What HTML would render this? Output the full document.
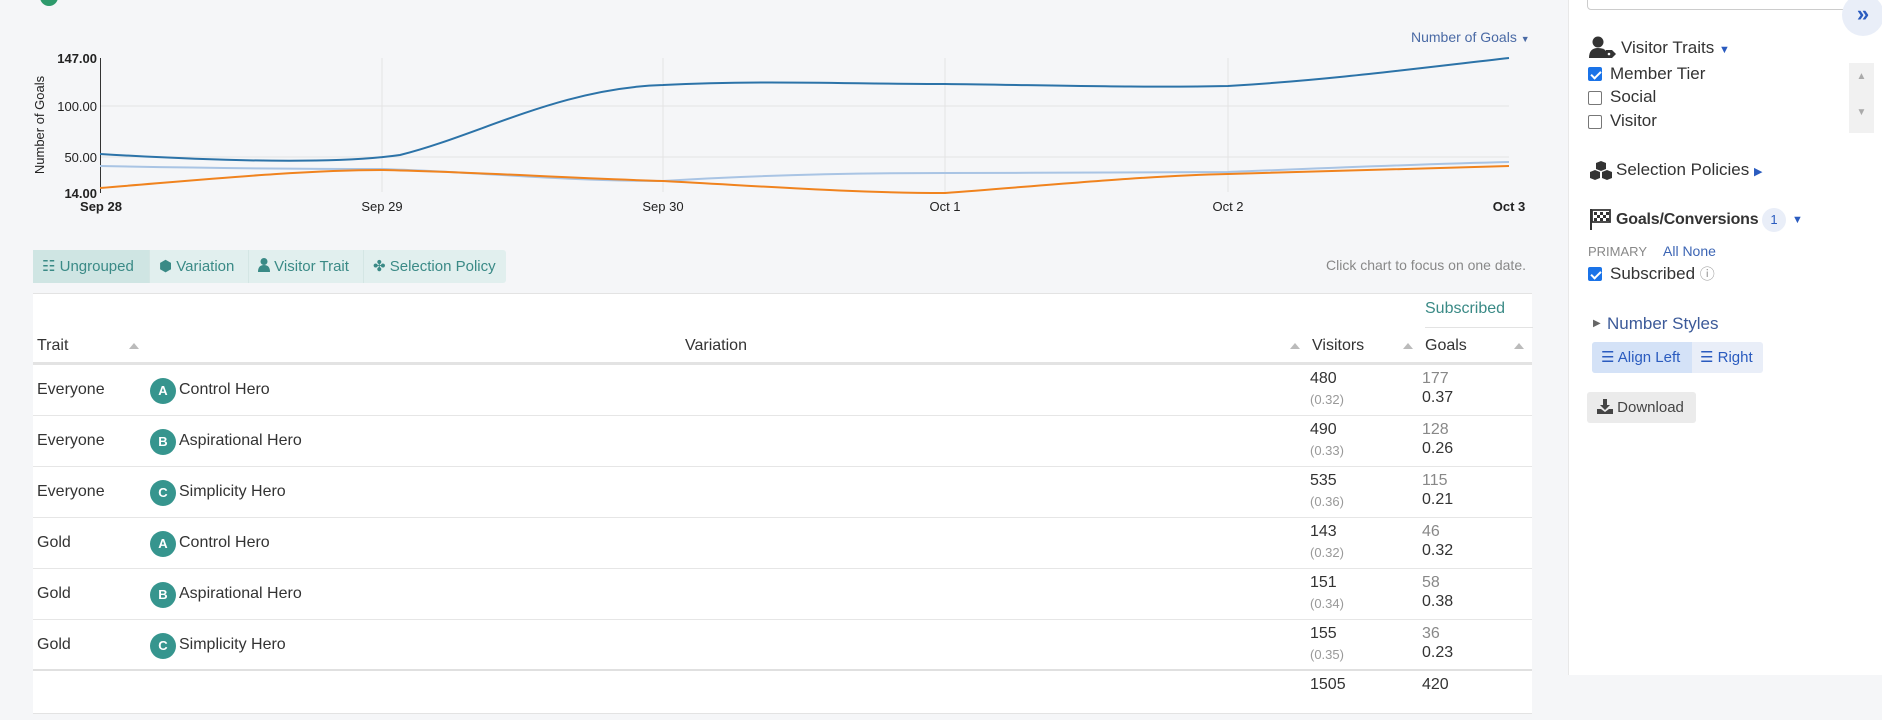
<!DOCTYPE html>
<html><head><meta charset="utf-8"><style>
*{box-sizing:border-box;margin:0;padding:0}
body{width:1882px;height:720px;overflow:hidden;background:#f5f6f8;font-family:"Liberation Sans",sans-serif;color:#333;position:relative}
.a{position:absolute;white-space:nowrap}
.tabs{left:33px;top:250px;height:33px;width:473px;background:#e1efee;border-radius:3px;display:flex}
.tabs div{height:33px;line-height:33px;color:#3a8a86;font-size:15px;padding-left:9px;border-right:1px solid #d4e6e4}
.tbl{left:33px;top:293px;width:1499px;height:421px;background:#fff;border-top:1px solid #e3e3e3;border-bottom:1px solid #e3e3e3}
.row{position:absolute;left:0;width:1499px;height:51px;border-bottom:1px solid #e6e6e6;font-size:16px}
.row .t{position:absolute;left:4px;top:16px}
.row .b{position:absolute;left:117px;top:13px;width:26px;height:26px;border-radius:50%;background:#36958e;color:#fff;font-size:13px;font-weight:bold;text-align:center;line-height:26px}
.row .v{position:absolute;left:146px;top:16px}
.row .n{position:absolute;left:1277px;top:5px}
.row .p{position:absolute;left:1277px;top:27px;font-size:13px;color:#999}
.row .g1{position:absolute;left:1389px;top:5px;color:#888}
.row .g2{position:absolute;left:1389px;top:24px}
.tri{display:inline-block;width:0;height:0;border-left:5px solid transparent;border-right:5px solid transparent;border-bottom:6px solid #bbb}
.side{left:1568px;top:0;width:314px;height:675px;background:#fff;border-left:1px solid #e8e8e8}
.cb{position:absolute;width:14px;height:14px;border:1px solid #777;border-radius:2px;background:#fff}
.cb.on{background:#1a73e8;border-color:#1a73e8}
.cb.on:after{content:"";position:absolute;left:4px;top:1px;width:4px;height:8px;border:solid #fff;border-width:0 2px 2px 0;transform:rotate(45deg)}
</style></head><body>
<div class="a" style="left:40px;top:-12px;width:18px;height:18px;border-radius:50%;background:#2e9a6c"></div>
<svg class="a" style="left:0;top:0" width="1560" height="230">
<g stroke="#e4e4e4" stroke-width="1">
<line x1="100" y1="106" x2="1509" y2="106"/><line x1="100" y1="157" x2="1509" y2="157"/>
<line x1="382" y1="58" x2="382" y2="192"/><line x1="663" y1="58" x2="663" y2="192"/><line x1="945" y1="58" x2="945" y2="192"/><line x1="1228" y1="58" x2="1228" y2="192"/>
</g>
<line x1="100.5" y1="58" x2="100.5" y2="193" stroke="#333"/>
<path d="M100,166 C200,168 300,169 382,169 C480,172 560,181 663,181 C760,175 850,173 945,173 C1040,173 1140,172 1228,172 C1330,168 1420,164 1509,162" fill="none" stroke="#a9c4e4" stroke-width="2"/>
<path d="M100,188 C200,180 300,170 382,170 C480,172 560,178 663,181 C760,186 850,193 945,193 C1040,186 1140,176 1228,174 C1330,171 1420,168 1509,166" fill="none" stroke="#f0831e" stroke-width="2"/>
<path d="M100,154 C200,160 330,165 400,155 C480,135 560,88 663,85 C760,80 850,84 945,84 C1040,85 1140,88 1228,86 C1330,80 1420,68 1509,58" fill="none" stroke="#2c73a8" stroke-width="2"/>
<g font-family="Liberation Sans" font-size="13" fill="#222" text-anchor="end">
<text x="97" y="63" font-weight="bold">147.00</text><text x="97" y="111">100.00</text><text x="97" y="162">50.00</text><text x="97" y="198" font-weight="bold">14.00</text>
</g>
<text x="44" y="125" font-family="Liberation Sans" font-size="13" fill="#222" text-anchor="middle" transform="rotate(-90 44 125)">Number of Goals</text>
<g font-family="Liberation Sans" font-size="13" fill="#222" text-anchor="middle">
<text x="101" y="211" font-weight="bold">Sep 28</text><text x="382" y="211">Sep 29</text><text x="663" y="211">Sep 30</text><text x="945" y="211">Oct 1</text><text x="1228" y="211">Oct 2</text><text x="1509" y="211" font-weight="bold">Oct 3</text>
</g>
</svg>
<div class="a" style="left:1411px;top:29px;font-size:14px;color:#4a6aa5">Number of Goals <span style="font-size:9px">▼</span></div>
<div class="a tabs">
<div style="width:117px;background:#cfe5e3">☷ Ungrouped</div>
<div style="width:99px">⬢ Variation</div>
<div style="width:115px"><svg width="12" height="14" viewBox="0 0 12 14" style="vertical-align:-1px"><circle cx="6" cy="3.5" r="3.5" fill="#3a8a86"/><path d="M0 14 Q0 7 6 7 Q12 7 12 14Z" fill="#3a8a86"/></svg> Visitor Trait</div>
<div style="width:142px;border:none">✤ Selection Policy</div>
</div>
<div class="a" style="left:1326px;top:257px;font-size:14px;color:#888">Click chart to focus on one date.</div>
<div class="a tbl">
<div class="a" style="left:1392px;top:6px;width:108px;height:28px;border-bottom:1px solid #e3e3e3;color:#3a8a86;font-size:16px">Subscribed</div>
<div class="a" style="left:0;top:43px;width:1499px;height:28px;border-bottom:3px solid #e3e3e3;font-size:16px">
<span class="a" style="left:4px;top:0">Trait</span><span class="a tri" style="left:96px;top:6px"></span>
<span class="a" style="left:652px;top:0">Variation</span>
<span class="a tri" style="left:1257px;top:6px"></span><span class="a" style="left:1279px;top:0">Visitors</span>
<span class="a tri" style="left:1370px;top:6px"></span><span class="a" style="left:1392px;top:0">Goals</span>
<span class="a tri" style="left:1481px;top:6px"></span>
</div>
<div class="row" style="top:71px"><span class="t">Everyone</span><span class="b">A</span><span class="v">Control Hero</span><span class="n">480</span><span class="p">(0.32)</span><span class="g1">177</span><span class="g2">0.37</span></div>
<div class="row" style="top:122px"><span class="t">Everyone</span><span class="b">B</span><span class="v">Aspirational Hero</span><span class="n">490</span><span class="p">(0.33)</span><span class="g1">128</span><span class="g2">0.26</span></div>
<div class="row" style="top:173px"><span class="t">Everyone</span><span class="b">C</span><span class="v">Simplicity Hero</span><span class="n">535</span><span class="p">(0.36)</span><span class="g1">115</span><span class="g2">0.21</span></div>
<div class="row" style="top:224px"><span class="t">Gold</span><span class="b">A</span><span class="v">Control Hero</span><span class="n">143</span><span class="p">(0.32)</span><span class="g1">46</span><span class="g2">0.32</span></div>
<div class="row" style="top:275px"><span class="t">Gold</span><span class="b">B</span><span class="v">Aspirational Hero</span><span class="n">151</span><span class="p">(0.34)</span><span class="g1">58</span><span class="g2">0.38</span></div>
<div class="row" style="top:326px;border-bottom:2px solid #e0e0e0"><span class="t">Gold</span><span class="b">C</span><span class="v">Simplicity Hero</span><span class="n">155</span><span class="p">(0.35)</span><span class="g1">36</span><span class="g2">0.23</span></div>
<span class="a" style="left:1277px;top:382px;font-size:16px">1505</span><span class="a" style="left:1389px;top:382px;font-size:16px">420</span>
</div>
<div class="a side"></div>
<div class="a" style="left:1587px;top:-10px;width:286px;height:20px;border:1px solid #ccc;border-radius:4px;background:#fff"></div>
<div class="a" style="left:1842px;top:-6px;width:42px;height:42px;border-radius:50%;background:#e9eef8;color:#2a5bbf;font-size:22px;font-weight:bold;text-align:center;line-height:40px">»</div>
<svg class="a" style="left:1589px;top:36px" width="28" height="22" viewBox="0 0 28 22"><circle cx="9" cy="6" r="5.5" fill="#333"/><path d="M0 22 Q0 12 9 12 Q15 12 17 15 L17 22Z" fill="#333"/><path d="M17 14 L23 14 L27 18 L23 22 L17 22Z" fill="#333"/><circle cx="20" cy="18" r="1.3" fill="#fff"/></svg>
<div class="a" style="left:1621px;top:38px;font-size:17px">Visitor Traits <span style="color:#2a5bbf;font-size:11px">▼</span></div>
<div class="cb on" style="left:1588px;top:67px"></div><div class="a" style="left:1610px;top:64px;font-size:17px">Member Tier</div>
<div class="cb" style="left:1588px;top:91px"></div><div class="a" style="left:1610px;top:87px;font-size:17px">Social</div>
<div class="cb" style="left:1588px;top:115px"></div><div class="a" style="left:1610px;top:111px;font-size:17px">Visitor</div>
<div class="a" style="left:1849px;top:63px;width:25px;height:70px;background:#f1f1f1;color:#aaa;font-size:10px;text-align:center;line-height:12px;padding-top:8px">▲<br><br><br>▼</div>
<svg class="a" style="left:1589px;top:160px" width="24" height="20" viewBox="0 0 24 20"><path d="M12 1 L17 3 L17 9 L12 11 L7 9 L7 3Z M6 10 L11 12 L11 18 L6 20 L1 18 L1 12Z M18 10 L23 12 L23 18 L18 20 L13 18 L13 12Z" fill="#333"/></svg>
<div class="a" style="left:1616px;top:160px;font-size:17px">Selection Policies <span style="color:#2a5bbf;font-size:11px">▶</span></div>
<svg class="a" style="left:1589px;top:208px" width="22" height="22" viewBox="0 0 22 22"><rect x="1" y="1" width="2" height="21" fill="#333"/><path d="M3 2 L21 2 L21 14 L3 14Z" fill="none" stroke="#333" stroke-width="1.8"/><path d="M5 4h3v3h-3zM11 4h3v3h-3zM17 4h3v3h-3zM8 7h3v3h-3zM14 7h3v3h-3zM5 10h3v3h-3zM11 10h3v3h-3zM17 10h3v3h-3z" fill="#333"/></svg>
<div class="a" style="left:1616px;top:211px;font-size:16px;font-weight:bold;letter-spacing:-0.2px">Goals/Conversions</div>
<div class="a" style="left:1762px;top:208px;width:24px;height:24px;border-radius:12px;background:#e9eef8;color:#2a5bbf;font-size:13px;text-align:center;line-height:24px">1</div>
<div class="a" style="left:1792px;top:214px;color:#2a5bbf;font-size:11px">▼</div>
<div class="a" style="left:1588px;top:244px;font-size:13px;color:#888">PRIMARY</div>
<div class="a" style="left:1663px;top:243px;font-size:14px;color:#3c65b4">All None</div>
<div class="cb on" style="left:1588px;top:267px"></div><div class="a" style="left:1610px;top:263px;font-size:17px">Subscribed <span style="color:#999;font-size:15px">ⓘ</span></div>
<div class="a" style="left:1593px;top:318px;font-size:10px;color:#666">▶</div>
<div class="a" style="left:1607px;top:314px;font-size:17px;color:#3c5a99">Number Styles</div>
<div class="a" style="left:1592px;top:342px;width:171px;height:31px;background:#e9eef8;border-radius:3px"></div>
<div class="a" style="left:1592px;top:342px;width:100px;height:31px;background:#d4e2f7;border-radius:3px 0 0 3px;color:#2a5bbf;font-size:15px;line-height:31px;padding-left:9px">☰ Align Left</div>
<div class="a" style="left:1700px;top:342px;color:#2a5bbf;font-size:15px;line-height:31px">☰ Right</div>
<div class="a" style="left:1587px;top:392px;width:109px;height:31px;background:#ebebeb;border-radius:3px;font-size:15px;line-height:31px;padding-left:10px;color:#444"><svg width="16" height="15" viewBox="0 0 16 15" style="vertical-align:-2px"><path d="M6 0h4v6h3l-5 5-5-5h3z M0 10h4l4 3 4-3h4v5H0z" fill="#444"/></svg> Download</div>
</body></html>
